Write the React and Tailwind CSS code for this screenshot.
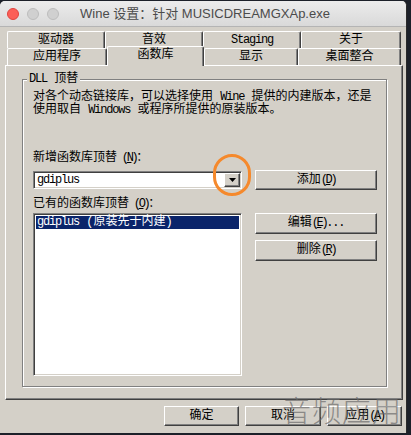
import React from 'react';

const ui = "font-['Liberation_Mono','Noto_Sans_CJK_SC',monospace] text-[12px] leading-[13px] text-black";

// latin runs in the bitmap font are 6px per char; squeeze mono to match
const L = ({ children }) => <span className="tracking-[-1.2px]">{children}</span>;

// " (X)" mnemonic suffix, narrow parens in the original font
const K = ({ k }) => (
  <span className="tracking-[-2.4px]">
    {' '}(<u>{k}</u>)
  </span>
);

const Button = ({ className = '', children }) => (
  <div
    className={`flex items-center justify-center bg-[#d4d0c8] border border-t-white border-l-white border-r-[#404040] border-b-[#404040] shadow-[inset_-1px_-1px_0_#808080] ${className}`}
  >
    {children}
  </div>
);

const Tab = ({ w, children }) => (
  <div
    className={`${w} h-full flex items-center justify-center border-t border-l border-r border-t-white border-l-white border-r-[#404040] rounded-t-[2px] shadow-[inset_-1px_0_0_#808080]`}
  >
    {children}
  </div>
);

export default function App() {
  return (
    <div className="w-[411px] h-[435px] bg-[#1c2029] overflow-hidden">
      <div className="relative w-[407px] h-[432px] mt-[1px] bg-[#d4d0c8] rounded-t-[5px] overflow-hidden flex flex-col border-r border-[#2a2a2a]">
        {/* title bar */}
        <div className="h-[26px] shrink-0 flex items-center bg-gradient-to-b from-[#ececec] to-[#d9d9d9] border-b border-[#b4b4b4]">
          <div className="flex items-center gap-[8px] pl-[7px]">
            <div className="w-[12px] h-[12px] rounded-full bg-[#fc5f57] border border-[#e0443e]" />
            <div className="w-[12px] h-[12px] rounded-full bg-[#d0d0d0] border border-[#bdbdbd]" />
            <div className="w-[12px] h-[12px] rounded-full bg-[#d0d0d0] border border-[#bdbdbd]" />
          </div>
          <div className="ml-[21px] whitespace-nowrap font-['Liberation_Sans','Noto_Sans_CJK_SC',sans-serif] text-[13px] text-[#4b4b4b]">
            Wine 设置：针对 MUSICDREAMGXAp.exe
          </div>
        </div>

        <div className={`${ui} flex flex-col pl-[5px] pr-[4px] pt-[4px]`}>
          {/* tab row 1 */}
          <div className="flex h-[17px] pl-[2px]">
            <Tab w="w-[98px]">驱动器</Tab>
            <Tab w="w-[98px]">音效</Tab>
            <Tab w="w-[98px]"><L>Staging</L></Tab>
            <Tab w="w-[100px]">关于</Tab>
          </div>
          {/* tab row 2 */}
          <div className="flex h-[17px] pl-[2px] relative z-10">
            <Tab w="w-[100px]">应用程序</Tab>
            <div className="w-[97px] h-[20px] -mt-[2px] flex items-center justify-center bg-[#d4d0c8] border-t border-l border-r border-t-white border-l-white border-r-[#404040] rounded-t-[2px] shadow-[inset_-1px_0_0_#808080] pb-[2px]">
              函数库
            </div>
            <Tab w="w-[94px]">显示</Tab>
            <Tab w="w-[103px]">桌面整合</Tab>
          </div>

          {/* tab panel */}
          <div className="w-[398px] h-[335px] border border-t-white border-l-white border-r-[#404040] border-b-[#404040] shadow-[inset_-1px_-1px_0_#808080] pl-[16px] pt-[13px]">
            <div className="relative w-[365px] h-[308px] border border-[#808080] shadow-[1px_1px_0_white,inset_1px_1px_0_white] pl-[10px] pt-[11px]">
              <div className="absolute -top-[7px] left-[4px] px-[2px] bg-[#d4d0c8]">
                <L>DLL</L> 顶替
              </div>

              <div>
                对各个动态链接库，可以选择使用 <L>Wine</L> 提供的内建版本，还是
                <br />
                使用取自 <L>Windows</L> 或程序所提供的原装版本。
              </div>

              <div className="mt-[35px]">
                新增函数库顶替<K k="N" />：
              </div>
              <div className="flex items-center mt-[5px]">
                <div className="w-[209px] h-[18px] bg-white border border-t-[#808080] border-l-[#808080] border-r-white border-b-white shadow-[inset_1px_1px_0_#404040,inset_-1px_-1px_0_#d4d0c8] flex items-center pl-[3px] pr-[1px]">
                  <span className="flex-1"><L>gdiplus</L></span>
                  <Button className="w-[16px] h-[14px]">
                    <svg width="7" height="4" viewBox="0 0 7 4">
                      <path d="M0 0h7L3.5 4z" fill="black" />
                    </svg>
                  </Button>
                </div>
                <Button className="w-[122px] h-[20px] ml-[13px]">
                  添加<K k="D" />
                </Button>
              </div>

              <div className="mt-[8px]">
                已有的函数库顶替<K k="O" />：
              </div>
              <div className="flex items-start mt-[2px]">
                <div className="w-[209px] h-[163px] bg-white border border-t-[#808080] border-l-[#808080] border-r-white border-b-white shadow-[inset_1px_1px_0_#404040,inset_-1px_-1px_0_#d4d0c8] p-[2px]">
                  <div className="h-[13px] bg-[#0a246a] text-white pl-[1px] whitespace-nowrap">
                    <L>gdiplus</L> (原装先于内建)
                  </div>
                </div>
                <div className="flex flex-col gap-[6px] ml-[13px]">
                  <Button className="w-[122px] h-[21px]">
                    编辑<K k="E" /><L>...</L>
                  </Button>
                  <Button className="w-[122px] h-[21px]">
                    删除<K k="R" />
                  </Button>
                </div>
              </div>
            </div>
          </div>

          {/* dialog buttons */}
          <div className="flex justify-end gap-[6px] mt-[6px]">
            <Button className="w-[75px] h-[20px]">确定</Button>
            <Button className="w-[76px] h-[20px]">取消</Button>
            <Button className="w-[75px] h-[20px]">应用<K k="A" /></Button>
          </div>
        </div>

        {/* highlight ring around the dropdown */}
        <div className="absolute left-[213px] top-[153px] w-[38px] h-[42px] rounded-full border-[3px] border-[#f5892c]" />

        {/* watermark */}
        <div className="absolute left-[282px] top-[391px] font-['Noto_Sans_CJK_SC',sans-serif] font-light text-[29px] leading-[34px] tracking-[1px] text-[#6a6a6a]/70">
          音频应用
        </div>
      </div>
    </div>
  );
}
